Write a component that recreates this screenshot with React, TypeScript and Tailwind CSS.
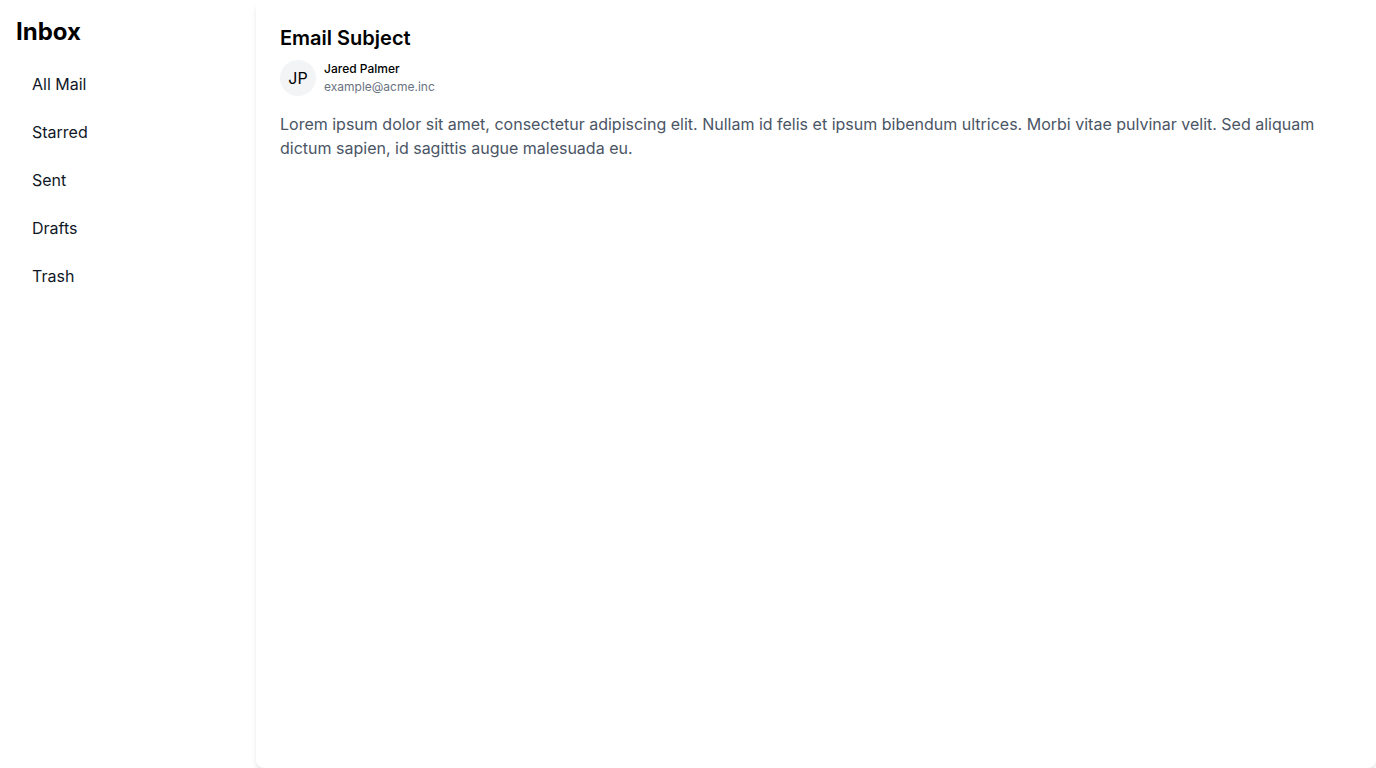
const navItems = ["All Mail", "Starred", "Sent", "Drafts", "Trash"];

export default function App() {
  return (
    <div className="flex h-screen bg-white font-['Inter',sans-serif] text-black">
      <aside className="w-64 shrink-0 p-4">
        <h1 className="mb-3 text-2xl font-bold">Inbox</h1>
        <nav className="flex flex-col">
          {navItems.map((item) => (
            <a key={item} href="#" className="px-4 py-3 text-base text-gray-900">
              {item}
            </a>
          ))}
        </nav>
      </aside>
      <main className="flex-1 rounded-lg bg-white p-6 shadow-md">
        <h2 className="text-xl font-semibold">Email Subject</h2>
        <div className="mt-2 flex items-center gap-2">
          <div className="flex h-9 w-9 items-center justify-center rounded-full bg-gray-100 text-base">
            JP
          </div>
          <div className="flex flex-col gap-0.5">
            <span className="text-xs font-medium">Jared Palmer</span>
            <span className="text-xs text-gray-500">example@acme.inc</span>
          </div>
        </div>
        <p className="mt-4 text-base text-gray-600">
          Lorem ipsum dolor sit amet, consectetur adipiscing elit. Nullam id felis et ipsum bibendum ultrices. Morbi vitae pulvinar velit. Sed aliquam dictum sapien, id sagittis augue malesuada eu.
        </p>
      </main>
    </div>
  );
}
